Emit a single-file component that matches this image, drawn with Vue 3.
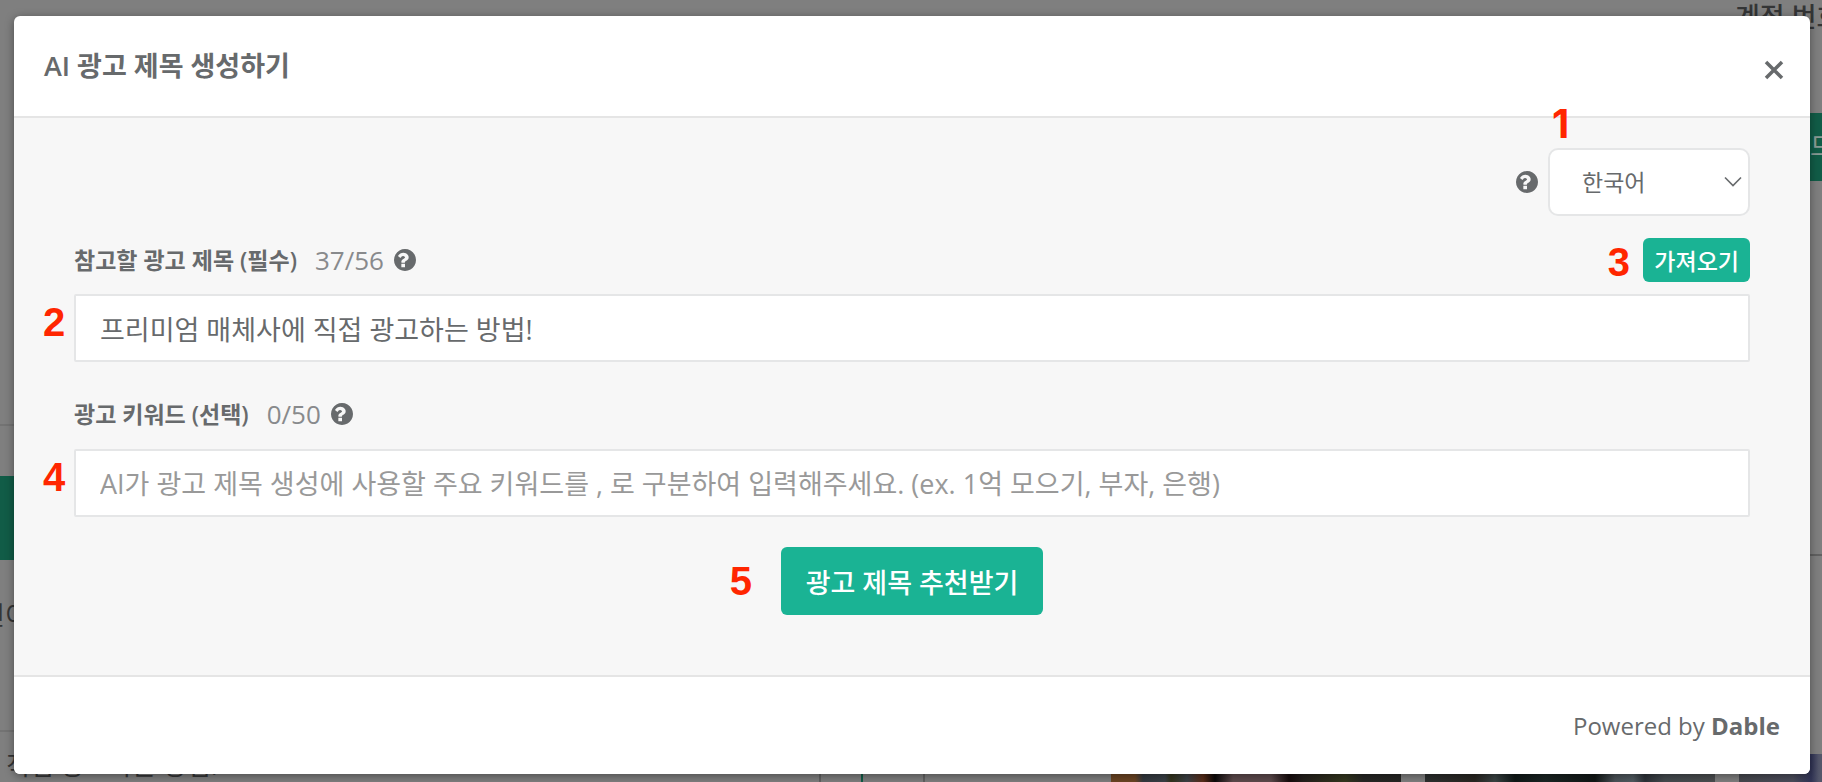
<script setup>
import { ref } from 'vue'

const language = ref('ko')
const title = ref('프리미엄 매체사에 직접 광고하는 방법!')
const keywords = ref('')

const helpPath =
  'M896 1376v-192q0-14-9-23t-23-9h-192q-14 0-23 9t-9 23v192q0 14 9 23t23 9h192q14 0 23-9t9-23zm256-672q0-88-55.5-163t-138.500-116-170-41q-243 0-371 213-15 24 8 42l132 100q7 6 19 6 16 0 25-12 53-68 86-92 34-24 86-24 48 0 85.500 26t37.500 59q0 38-20 61t-68 45q-63 28-115.500 86.500t-52.500 125.500v36q0 14 9 23t23 9h192q14 0 23-9t9-23q0-19 21.500-49.500t54.500-49.500q32-18 49-28.500t46-35 44.500-48 28-60.500 12.500-81zm512 192q0 209-103 385.500t-279.500 279.500-385.500 103-385.500-103-279.500-279.500-103-385.500 103-385.500 279.500-279.500 385.500-103 385.500 103 279.500 279.500 103 385.500z'
</script>

<template>
  <div class="screen">
    <div class="page" aria-hidden="true">
      <span class="account">계정 번호</span>
      <i class="block side-left"></i>
      <i class="block side-right">드</i>
      <i class="rule rule-a"></i>
      <i class="rule rule-b"></i>
      <i class="rule rule-c"></i>
      <span class="cell-text">인이</span>
      <span class="row-text">직접 광고하는 방법!</span>
      <i class="tick tick-a"></i>
      <i class="tick tick-b"></i>
      <i class="tick tick-c"></i>
      <i class="thumb thumb-a"></i>
      <i class="thumb thumb-b"></i>
      <i class="thumb thumb-c"></i>
    </div>

    <section class="modal" role="dialog" aria-labelledby="dialog-title">
      <header class="head">
        <h1 id="dialog-title">AI 광고 제목 생성하기</h1>
        <button class="close" type="button" aria-label="닫기">
          <svg width="20" height="20" viewBox="0 0 20 20">
            <path d="M2 2 18 18M18 2 2 18" fill="none" stroke="#676a6c" stroke-width="3.500" />
          </svg>
        </button>
      </header>

      <form class="body" @submit.prevent>
        <div class="language">
          <svg class="help" viewBox="128 128 1536 1536"><path :d="helpPath" /></svg>
          <div class="select">
            <select v-model="language" aria-label="언어">
              <option value="ko">한국어</option>
            </select>
            <svg class="chevron" width="18" height="12" viewBox="0 0 18 12">
              <path d="M1 1.500 9 9.500 17 1.500" fill="none" stroke="#676a6c" stroke-width="1.600" />
            </svg>
            <span class="mark mark-one">1</span>
          </div>
        </div>

        <div class="row">
          <label for="ad-title">참고할 광고 제목 (필수)</label>
          <span class="count">37/56</span>
          <svg class="help" viewBox="128 128 1536 1536"><path :d="helpPath" /></svg>
          <div class="import">
            <button class="primary small" type="button">가져오기</button>
            <span class="mark mark-three">3</span>
          </div>
        </div>
        <div class="field">
          <input id="ad-title" v-model="title" type="text" />
          <span class="mark mark-side">2</span>
        </div>

        <div class="row second">
          <label for="ad-keywords">광고 키워드 (선택)</label>
          <span class="count">0/50</span>
          <svg class="help" viewBox="128 128 1536 1536"><path :d="helpPath" /></svg>
        </div>
        <div class="field">
          <input
            id="ad-keywords"
            v-model="keywords"
            type="text"
            placeholder="AI가 광고 제목 생성에 사용할 주요 키워드를 , 로 구분하여 입력해주세요. (ex. 1억 모으기, 부자, 은행)"
          />
          <span class="mark mark-side">4</span>
        </div>

        <div class="submit">
          <button class="primary large" type="submit">광고 제목 추천받기</button>
          <span class="mark mark-five">5</span>
        </div>
      </form>

      <footer class="foot">Powered by <strong>Dable</strong></footer>
    </section>
  </div>
</template>

<style>
body {
  margin: 0;
  background: #7f7f7f;
}
</style>

<style scoped>
.screen {
  position: relative;
  box-sizing: border-box;
  min-height: 100vh;
  padding: 16px 12px 8px 14px;
  overflow: hidden;
  font-family: "Open Sans", "Noto Sans CJK KR", sans-serif;
  color: #676a6c;
}

/* dimmed page behind the dialog */
.page {
  position: absolute;
  inset: 0;
  overflow: hidden;
  background: #7f7f7f;
  color: #343536;
}
.page > * {
  position: absolute;
  white-space: nowrap;
  font-style: normal;
}
.account {
  left: 1735px;
  top: 0;
  font-size: 27px;
  line-height: 34px;
  font-weight: 500;
}
.block {
  background: #115c47;
  color: #8a9a95;
}
.side-left {
  left: 0;
  top: 476px;
  width: 20px;
  height: 84px;
}
.side-right {
  right: 0;
  top: 113px;
  width: 12px;
  height: 68px;
  font-size: 26px;
  line-height: 66px;
}
.rule {
  height: 2px;
  background: #737373;
}
.rule-a {
  left: 0;
  top: 424px;
  width: 20px;
}
.rule-b {
  left: 0;
  top: 730px;
  width: 20px;
}
.rule-c {
  right: 0;
  top: 554px;
  width: 20px;
  background: #616161;
}
.cell-text {
  left: -19px;
  top: 598px;
  font-size: 26px;
  line-height: 34px;
}
.row-text {
  left: 6px;
  top: 748px;
  font-size: 26px;
  line-height: 34px;
}
.tick {
  bottom: 0;
  width: 2px;
  height: 20px;
  background: #626262;
}
.tick-a {
  left: 819px;
}
.tick-b {
  left: 861px;
  background: #115c47;
}
.tick-c {
  left: 923px;
}
.thumb {
  bottom: 0;
  height: 20px;
}
.thumb-a {
  left: 1111px;
  width: 290px;
  background: linear-gradient(90deg, #6b4423 0, #6b4423 24px, #34393f 32px, #3a4046 54px, #33331c 60px, #3c4146 76px, #5a2c18 92px, #0c0909 104px, #5d4a4c 122px, #5d4a4c 160px, #170c0c 178px, #241f1c 192px, #35381f 234px, #272725 252px, #262624 290px);
}
.thumb-b {
  left: 1425px;
  width: 290px;
  background: linear-gradient(90deg, #2d302f 0, #292622 50px, #3b4444 70px, #101817 90px, #1b2524 120px, #111716 170px, #4b5358 190px, #515b61 208px, #2d3238 220px, #454b4f 240px, #4b4e50 290px);
}
.thumb-c {
  right: 0;
  width: 83px;
  height: 28px;
  background: linear-gradient(90deg, #47484e 0, #4b4d5b 54px, #303355 72px, #53566a 80px);
}

/* dialog */
.modal {
  position: relative;
  border-radius: 6px;
  background: #fff;
  box-shadow: 0 2px 10px rgba(0, 0, 0, 0.4);
}
.head {
  display: flex;
  align-items: center;
  justify-content: space-between;
  height: 100px;
  padding: 0 26px 0 30px;
  border-bottom: 2px solid #e5e5e5;
}
h1 {
  margin: 0;
  font-size: 27px;
  line-height: 36px;
  font-weight: 600;
}
.close {
  display: flex;
  margin: 8px 0 0;
  padding: 0;
  border: 0;
  background: none;
}
.body {
  padding: 30px 60px 60px;
  background: #f7f7f7;
}
.language {
  display: flex;
  align-items: center;
  justify-content: flex-end;
  gap: 10px;
  margin-bottom: 22px;
}
.help {
  flex: none;
  width: 22px;
  height: 22px;
  fill: #676a6c;
}
.select,
.import,
.field,
.submit {
  position: relative;
}
select {
  display: block;
  box-sizing: border-box;
  width: 202px;
  height: 68px;
  padding: 0 40px 0 32px;
  border: 2px solid #e5e6e7;
  border-radius: 10px;
  appearance: none;
  background: #fff;
  color: inherit;
  font-family: inherit;
  font-size: 23px;
}
.chevron {
  position: absolute;
  right: 8px;
  top: 28px;
  pointer-events: none;
}
.row {
  display: flex;
  align-items: center;
  height: 44px;
  margin-bottom: 12px;
}
.second {
  margin-top: 30px;
  margin-bottom: 13px;
}
label {
  font-size: 23px;
  line-height: 32px;
  font-weight: 600;
}
.count {
  margin: 0 10px 0 18px;
  font-size: 26px;
  line-height: 36px;
  color: #888a8c;
}
.import {
  margin-left: auto;
}
.primary {
  display: block;
  border: 0;
  background: #1ab394;
  color: #fff;
  font-family: inherit;
  font-weight: 500;
}
.small {
  height: 44px;
  padding: 0 11px;
  border-radius: 6px;
  font-size: 23px;
}
.large {
  height: 68px;
  padding: 0 25px;
  border-radius: 6px;
  font-size: 27px;
}
input {
  display: block;
  box-sizing: border-box;
  width: 100%;
  height: 68px;
  padding: 0 24px;
  border: 2px solid #e5e6e7;
  border-radius: 2px;
  background: #fff;
  color: inherit;
  font-family: inherit;
  font-size: 27px;
}
input::placeholder {
  color: #999;
  opacity: 1;
}
.submit {
  width: fit-content;
  margin: 30px auto 0;
}
.foot {
  padding: 32px 30px 31px;
  border-top: 2px solid #e5e5e5;
  border-radius: 0 0 6px 6px;
  background: #fff;
  font-size: 24px;
  line-height: 34px;
  text-align: right;
}
.foot strong {
  font-weight: 700;
}

/* numbered callouts */
.mark {
  position: absolute;
  color: #ff2600;
  font-family: "Liberation Sans", Arial, sans-serif;
  font-size: 40px;
  line-height: 40px;
  font-weight: 700;
}
.mark-one {
  left: 4px;
  top: -44px;
  font-family: Inter, sans-serif;
}
.mark-three {
  right: 120px;
  top: 4px;
}
.mark-side {
  left: -31px;
  top: 8px;
}
.mark-five {
  left: -51px;
  top: 14px;
}
</style>
